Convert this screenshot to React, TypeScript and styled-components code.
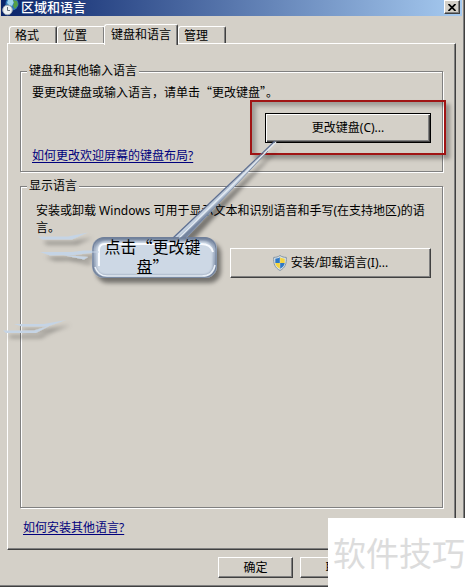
import React from "react";
import styled, { createGlobalStyle, css } from "styled-components";

const face = "#d4d0c8";
const uiFont = `"Noto Sans", "Noto Sans CJK SC", sans-serif`;
const cjkFont = `"Noto Sans CJK SC", sans-serif`;

const GlobalStyle = createGlobalStyle`
  *, *::before, *::after { box-sizing: border-box; }
  body { margin: 0; background: #fff; font: 12px/16px ${uiFont}; color: #000; }
  button { font: inherit; color: inherit; }
`;

const Page = styled.div`
  position: relative;
  display: flex;
  min-height: 100vh;
  padding: 0 4px 1px 0;
  overflow: hidden;
`;

const Dialog = styled.main`
  flex: 1;
  min-width: 0;
  display: flex;
  flex-direction: column;
  background: ${face};
  border-right: 1px solid #404040;
  border-bottom: 1px solid #404040;
  box-shadow: inset -1px -1px 0 #808080;
`;

const TitleBar = styled.header`
  display: flex;
  align-items: center;
  height: 16px;
  margin: 0 2px 0 1px;
  padding: 0 2px 0 1px;
  background: linear-gradient(to right, #0a246a, #a6caf0);
`;

const Title = styled.h1`
  flex: 1;
  margin: 0 0 2px 2px;
  font: 500 13px/14px ${cjkFont};
  color: #fff;
`;

const CloseButton = styled.button`
  display: grid;
  place-items: center;
  width: 16px;
  height: 14px;
  margin-bottom: 2px;
  padding: 0;
  background: ${face};
  border: 1px solid;
  border-color: #fff #404040 #404040 #fff;
  box-shadow: inset -1px -1px 0 #808080;
`;

const Tabs = styled.div`
  display: flex;
  align-items: flex-end;
  height: 28px;
  margin: 0 8px 0 9px;
`;

const Tab = styled.button<{ $selected?: boolean; $wide?: boolean }>`
  height: 18px;
  padding: 0 12px 0 5px;
  text-align: left;
  background: ${face};
  border: solid;
  border-width: 1px 1px 0 1px;
  border-color: #fff #404040 #fff #fff;
  border-radius: 3px 2px 0 0;
  box-shadow: inset -1px 0 0 #808080;
  ${(p) => p.$wide && css`padding-right: 17px;`}
  ${(p) =>
    p.$selected &&
    css`
      position: relative;
      height: 21px;
      margin: 0 0 -1px -1px;
      padding: 0 6px 1px 6px;
    `}
`;

const Panel = styled.section`
  flex: 1;
  display: flex;
  flex-direction: column;
  margin: -1px 8px 0 7px;
  padding: 19px 12px 13px 12px;
  border: 1px solid;
  border-color: #fff #404040 #404040 #fff;
  box-shadow: inset -1px -1px 0 #808080;
`;

const Group = styled.fieldset<{ $grow?: boolean }>`
  display: flex;
  flex-direction: column;
  min-width: 0;
  margin: 0 0 6px;
  padding: 4px 11px 7px 11px;
  border: 1px solid #808080;
  box-shadow: 1px 1px 0 #fff, inset 1px 1px 0 #fff;
  ${(p) =>
    p.$grow &&
    css`
      flex: 1;
      margin-bottom: 12px;
      padding: 8px 11px 7px 15px;
    `}
`;

const Legend = styled.legend<{ $indent?: boolean }>`
  margin-left: ${(p) => (p.$indent ? "-9px" : "-5px")};
  padding: 0 2px;
  background: ${face};
`;

const Note = styled.p<{ $quoted?: boolean }>`
  margin: 0;
  line-height: 17px;
  ${(p) => p.$quoted && css`font-family: ${cjkFont};`}
`;

const Link = styled.a`
  align-self: flex-start;
  color: #00007c;
  text-decoration: underline;
  text-underline-offset: 2px;
`;

const PushButton = styled.button<{ $default?: boolean }>`
  display: flex;
  align-items: center;
  justify-content: center;
  gap: 4px;
  width: 100%;
  height: 30px;
  padding: 0;
  background: ${face};
  border: 1px solid;
  border-color: #fff #404040 #404040 #fff;
  box-shadow: inset -1px -1px 0 #808080;
  ${(p) =>
    p.$default &&
    css`
      border-color: #000;
      box-shadow: inset 1px 1px 0 #fff, inset -1px -1px 0 #404040,
        inset -2px -2px 0 #808080;
    `}
`;

const ChangeSlot = styled.div`
  position: relative;
  align-self: flex-end;
  width: 166px;
  margin: 13px 0 5px;
  &::after {
    content: "";
    position: absolute;
    inset: -13px -15px -12px -15px;
    border: 2px solid #a01414;
    box-shadow: 4px 4px 4px rgba(0, 0, 0, 0.3),
      inset 4px 4px 4px rgba(0, 0, 0, 0.25);
    pointer-events: none;
  }
`;

const InstallSlot = styled.div`
  align-self: flex-end;
  width: 201px;
  margin-top: 12px;
`;

const PanelFoot = styled.div`
  display: flex;
  padding-left: 3px;
`;

const Actions = styled.footer`
  display: flex;
  justify-content: flex-end;
  gap: 7px;
  padding: 7px 89px 8px 0;
`;

const ActionButton = styled(PushButton)`
  width: 75px;
  height: 21px;
`;

const Annotation = styled.svg`
  position: absolute;
  left: 0;
  top: 0;
  pointer-events: none;
`;

const CalloutText = styled.p`
  position: absolute;
  left: 92px;
  top: 236px;
  width: 125px;
  margin: 0;
  padding: 0 14px 0 10px;
  text-align: center;
  font: 16px/20px ${cjkFont};
`;

const Watermark = styled.div`
  position: absolute;
  right: 0;
  bottom: 0;
  padding: 10px 4px 12px 5px;
  background: #fff;
  color: #dcdcdc;
  font: 400 33px/48px ${cjkFont};
`;

function RegionIcon() {
  return (
    <svg width="17" height="16" viewBox="0 0 17 16" aria-hidden="true">
      <circle cx="10" cy="4" r="6.5" fill="#2f78b8" />
      <path d="M6 0l4-1 2 3-2 4-3-1-2-2z" fill="#9ed5ee" />
      <path d="M11 0l4 1 1 4-3 4-2-3 1-3z" fill="#55a044" />
      <circle cx="5.500" cy="10" r="4.800" fill="#eef1f3" stroke="#9ca7b0" />
      <path d="M5.500 7v3.500H8" fill="none" stroke="#66717c" />
    </svg>
  );
}

function ShieldIcon() {
  return (
    <svg width="14" height="16" viewBox="0 0 14 16" aria-hidden="true">
      <path d="M7 .5C5 2 3 2.300.7 2.400c-.4 6 1 10.400 6.300 13.100 5.300-2.700 6.700-7.100 6.300-13.100C11 2.300 9 2 7 .5z" fill="#d8e2ea" stroke="#8496a4" />
      <path d="M6.800 2.300C5.300 3.300 4 3.600 2.300 3.800V8h4.500z" fill="#2f78c4" />
      <path d="M7.200 2.300c1.500 1 2.800 1.300 4.500 1.500V8H7.200z" fill="#f5d43c" />
      <path d="M2.300 8h4.500v5.700C4 12.300 2.700 10.500 2.300 8z" fill="#f5d43c" />
      <path d="M11.700 8H7.200v5.700c2.800-1.400 4.100-3.200 4.500-5.700z" fill="#2f78c4" />
    </svg>
  );
}

function CalloutDrawing() {
  return (
    <Annotation width="300" height="350" viewBox="0 0 300 350" aria-hidden="true">
      <defs>
        <filter id="shade" x="-20%" y="-20%" width="150%" height="160%">
          <feDropShadow dx="4" dy="5" stdDeviation="2" floodColor="#000" floodOpacity="0.45" />
        </filter>
        <filter id="faint" x="-20%" y="-20%" width="150%" height="160%">
          <feDropShadow dx="5" dy="5" stdDeviation="2" floodColor="#000" floodOpacity="0.35" />
        </filter>
        <filter id="soft">
          <feGaussianBlur stdDeviation="1.200" />
        </filter>
        <linearGradient id="rim" x1="0" y1="0" x2="0" y2="1">
          <stop offset="0" stopColor="#6d7d97" />
          <stop offset="0.3" stopColor="#a3b1c6" />
          <stop offset="1" stopColor="#8291a8" />
        </linearGradient>
        <linearGradient id="beam" gradientUnits="userSpaceOnUse" x1="208" y1="196" x2="217" y2="206">
          <stop offset="0" stopColor="#5d6f91" />
          <stop offset="0.4" stopColor="#a9b7cc" />
          <stop offset="0.7" stopColor="#c9d5e3" />
          <stop offset="1" stopColor="#75859f" />
        </linearGradient>
      </defs>
      <g filter="url(#faint)">
        <path d="M38 236.500H68L88 232.500 72 239.500H42zM40 252H72L84 250.500H100V252L74 255 50 255.500zM60 254.500L88 257 84 259.500z" fill="#c5d4e5" />
        <path d="M14 324H44L66 320 48 326.500H22zM3 330.500H34L50 325.500 36 333H6z" fill="#c5d4e5" />
      </g>
      <g filter="url(#shade)">
        <path d="M171 240L278 140 191 233 183 240z" fill="url(#beam)" />
        <rect x="92" y="237" width="125" height="41" rx="12" fill="url(#rim)" />
      </g>
      <path d="M173 238L275 141" stroke="#5c6e92" strokeWidth="1.200" />
      <path d="M179 238L276 142" stroke="#e4ebf3" strokeWidth="1.200" />
      <path d="M186 238L268 151" stroke="#8594ac" />
      <rect x="93" y="238" width="123" height="39" rx="11" fill="none" stroke="#71819b" />
      <rect x="96" y="241" width="117" height="34" rx="9" fill="#cdd8e5" filter="url(#soft)" />
      <path d="M95 267q3 9 12 9h95q11 0 13-11" fill="none" stroke="#e8eff7" strokeWidth="1.500" />
      <path d="M99 266v-16q0-6 6-6h96q10 0 12 8" fill="none" stroke="#f8fbff" strokeWidth="2" />
      <path d="M78 252h21" stroke="#c5d4e5" />
    </Annotation>
  );
}

export default function App() {
  return (
    <Page>
      <GlobalStyle />
      <Dialog>
        <TitleBar>
          <RegionIcon />
          <Title>区域和语言</Title>
          <CloseButton aria-label="关闭">
            <svg width="8" height="7" viewBox="0 0 8 7" aria-hidden="true">
              <path d="M.5 0l7 7M7.500 0l-7 7" stroke="#000" strokeWidth="1.700" />
            </svg>
          </CloseButton>
        </TitleBar>
        <Tabs role="tablist">
          <Tab role="tab" $wide>格式</Tab>
          <Tab role="tab" $wide>位置</Tab>
          <Tab role="tab" aria-selected $selected>键盘和语言</Tab>
          <Tab role="tab" $wide>管理</Tab>
        </Tabs>
        <Panel role="tabpanel">
          <Group>
            <Legend>键盘和其他输入语言</Legend>
            <Note $quoted>要更改键盘或输入语言，请单击“更改键盘”。</Note>
            <ChangeSlot>
              <PushButton $default>更改键盘(C)...</PushButton>
            </ChangeSlot>
            <Link href="#layout">如何更改欢迎屏幕的键盘布局?</Link>
          </Group>
          <Group $grow>
            <Legend $indent>显示语言</Legend>
            <Note>安装或卸载 Windows 可用于显示文本和识别语音和手写(在支持地区)的语言。</Note>
            <InstallSlot>
              <PushButton>
                <ShieldIcon />
                安装/卸载语言(I)...
              </PushButton>
            </InstallSlot>
          </Group>
          <PanelFoot>
            <Link href="#install">如何安装其他语言?</Link>
          </PanelFoot>
        </Panel>
        <Actions>
          <ActionButton>确定</ActionButton>
          <ActionButton>取消</ActionButton>
        </Actions>
      </Dialog>
      <CalloutDrawing />
      <CalloutText>点击“更改键盘”</CalloutText>
      <Watermark>软件技巧</Watermark>
    </Page>
  );
}
